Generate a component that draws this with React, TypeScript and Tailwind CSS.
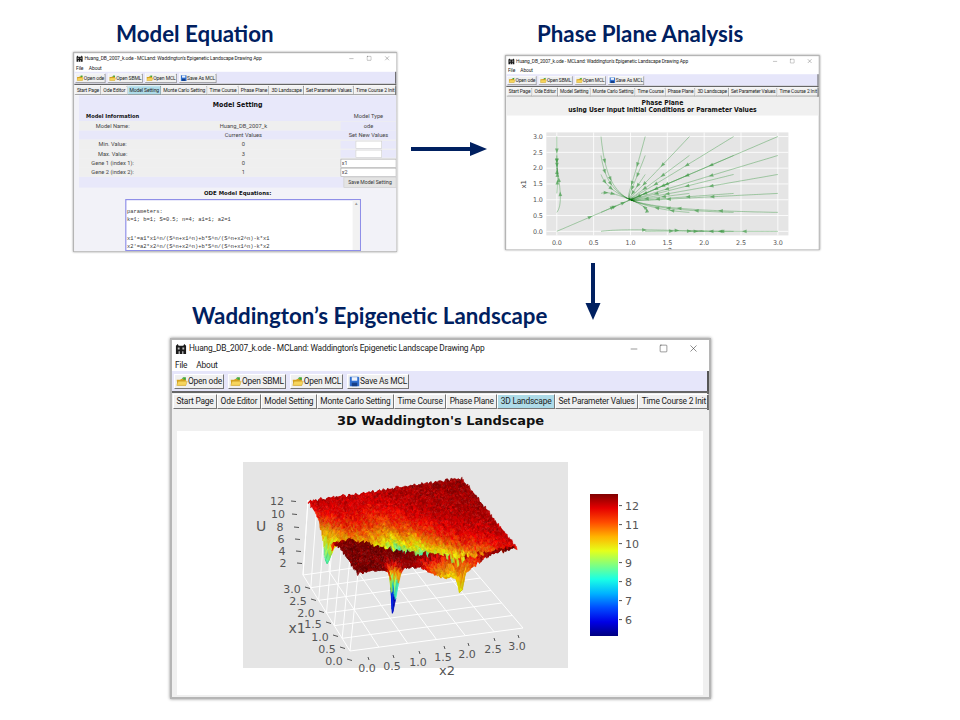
import type { ReactNode } from "react";
import { Minus, Square, X } from "lucide-react";

const TABS = [
  "Start Page",
  "Ode Editor",
  "Model Setting",
  "Monte Carlo Setting",
  "Time Course",
  "Phase Plane",
  "3D Landscape",
  "Set Parameter Values",
  "Time Course 2 Init",
];

function FolderIcon() {
  return (
    <svg width="12" height="11" viewBox="0 0 17 15" className="shrink-0">
      <path d="M1 5h5l1-1h7v9H2z" fill="#d9a520" />
      <path d="M1 13l2-6h13l-2 6z" fill="#f7d55c" stroke="#b8901c" strokeWidth="0.5" />
      <path d="M8 4c1-2 3-3 5-2l1-1v4h-4l1-1c-1-.5-2 0-3 0z" fill="#3fa535" />
    </svg>
  );
}

function SaveIcon() {
  return (
    <svg width="11" height="11" viewBox="0 0 14 14" className="shrink-0">
      <path d="M1 1h11l1 1v11H1z" fill="#2f6fd0" />
      <rect x="3.5" y="1.5" width="7" height="4.5" fill="#eef3fb" />
      <rect x="3.5" y="8.5" width="7" height="4.5" fill="#173f86" />
    </svg>
  );
}

function AppIcon() {
  return (
    <svg width="12" height="12" viewBox="0 0 13 13" className="shrink-0">
      <path d="M1 3l2-2 1 2h5l1-2 2 2v9h-3v-3H8v3H5V9H4v3H1z" fill="#1b1b1b" />
      <path d="M3 5h2v2H3zM8 5h2v2H8z" fill="#bdbdbd" />
    </svg>
  );
}

function ToolButton({ label, save }: { label: string; save?: boolean }) {
  return (
    <div className="flex h-[15px] items-center border border-b-[#777] border-l-white border-r-[#777] border-t-white bg-[#f0f0f0] px-px">
      {save ? <SaveIcon /> : <FolderIcon />}
      <span>{label}</span>
    </div>
  );
}

// full size is 541px wide, the two upper copies are scaled down from that
function AppWindow({ active, height, children }: { active?: string; height: string; children: ReactNode }) {
  return (
    <div
      className={`flex w-[541px] flex-col overflow-hidden border-2 border-[#b5b5b5] bg-white font-['Roboto',sans-serif] text-[8.4px] tracking-[-0.2px] text-[#222] ${height}`}
    >
      <div className="flex h-[17px] shrink-0 items-center gap-[2px] pl-[3px]">
        <AppIcon />
        <span>Huang_DB_2007_k.ode - MCLand: Waddington's Epigenetic Landscape Drawing App</span>
        <div className="ml-auto flex items-center gap-[20px] pr-[10px] text-[#333]">
          <Minus size={10} strokeWidth={1.2} />
          <Square size={9} strokeWidth={1.3} />
          <X size={11} strokeWidth={1.2} />
        </div>
      </div>
      <div className="flex h-[14px] shrink-0 items-center gap-[9px] pl-[3px] pt-[2px]">
        <span>File</span>
        <span>About</span>
      </div>
      <div className="flex h-[20px] shrink-0 items-center gap-[4px] border-r-2 border-[#555] bg-[#e6e6fa] pl-[2px] pt-px">
        <ToolButton label="Open ode" />
        <ToolButton label="Open SBML" />
        <ToolButton label="Open MCL" />
        <ToolButton label="Save As MCL" save />
      </div>
      <div className="flex h-[19px] shrink-0 items-center justify-between border-r-2 border-t-2 border-[#666] bg-[#f0f0f0] px-px">
        {TABS.map((tab) => (
          <div
            key={tab}
            className={`flex h-[15px] items-center whitespace-nowrap border border-b-[#777] border-l-white border-r-[#777] border-t-white px-[2.5px] ${
              tab === active ? "border-t-[#555] border-l-[#555] bg-[#aedbe8]" : ""
            }`}
          >
            {tab}
          </div>
        ))}
      </div>
      <div className="min-h-0 flex-1 overflow-hidden">{children}</div>
    </div>
  );
}

function Row({
  shade,
  first,
  second,
  third,
  input,
}: {
  shade?: boolean;
  first?: ReactNode;
  second?: ReactNode;
  third?: ReactNode;
  input?: string;
}) {
  return (
    <div className={`grid h-[17px] grid-cols-[112px_324px_1fr] items-center text-center text-[#444] ${shade ? "bg-[#efefef]" : "bg-[#e8e8fa]"}`}>
      <div>{first}</div>
      <div>{second}</div>
      {input !== undefined ? (
        <input
          readOnly
          defaultValue={input}
          className="h-[15px] w-full border border-[#999] bg-white pl-[1px] text-left text-[9px] outline-none"
        />
      ) : (
        <div className="bg-[#e8e8fa]">{third}</div>
      )}
    </div>
  );
}

function SmallBox() {
  return <div className="mx-auto h-[13px] w-[44px] border border-[#ccc] bg-white" />;
}

function ModelSetting() {
  return (
    <div className="flex h-full flex-col bg-[#f2f2f8] pl-[8px] font-['Roboto',sans-serif] text-[9.5px] tracking-normal">
      <div className="flex h-[30px] items-end justify-center bg-[#e8e8fa] pb-[4px] font-['DejaVu_Sans',sans-serif] text-[10.5px] font-bold text-[#111]">
        Model Setting
      </div>
      <Row first={<span className="font-['DejaVu_Sans',sans-serif] text-[8.5px] font-bold text-[#111]">Model Information</span>} third="Model Type" />
      <Row shade first="Model Name:" second="Huang_DB_2007_k" third="ode" />
      <Row second="Current Values" third="Set New Values" />
      <Row shade first="Min. Value:" second="0" third={<SmallBox />} />
      <Row shade first="Max. Value:" second="3" third={<SmallBox />} />
      <Row shade first="Gene 1 (index 1):" second="0" input="x1" />
      <Row shade first="Gene 2 (index 2):" second="1" input="x2" />
      <div className="flex h-[19px] justify-end bg-[#e8e8fa]">
        <div className="flex w-[88px] items-center justify-center border border-[#ccc] bg-[#e4e4e4] text-[8.5px] text-[#333]">Save Model Setting</div>
      </div>
      <div className="flex h-[21px] items-center justify-center font-['DejaVu_Sans',sans-serif] text-[9px] font-bold text-[#111]">ODE Model Equations:</div>
      <div className="ml-[77px] flex w-[393px] flex-1 border-2 border-[#8f8fe8] bg-white pl-[1px] font-['Liberation_Mono',monospace] text-[9px] leading-[11.5px] text-[#333]">
        <div className="flex-1 pt-[15px]">
          <div>parameters:</div>
          <div>k=1; b=1; S=0.5; n=4; a1=1; a2=1</div>
          <div className="mt-[22px]">x1'=a1*x1^n/(S^n+x1^n)+b*S^n/(S^n+x2^n)-k*x1</div>
          <div>x2'=a2*x2^n/(S^n+x2^n)+b*S^n/(S^n+x1^n)-k*x2</div>
        </div>
        <div className="w-[12px] shrink-0 bg-[#f2f2f2] text-center text-[7px] leading-[12px] text-[#999]">▲</div>
      </div>
    </div>
  );
}

// x1, x2 phase flow from the equations shown in the model window
function flow(x1: number, x2: number): [number, number] {
  const s = 0.0625;
  const h = (v: number) => (v * v * v * v) / (s + v * v * v * v);
  const r = (v: number) => s / (s + v * v * v * v);
  return [h(x1) + r(x2) - x1, h(x2) + r(x1) - x2];
}

const GRID_STARTS = [0, 0.6, 1.2, 1.8, 2.4, 3];

function trajectories() {
  const out: { d: string; marks: { x: number; y: number; a: number }[] }[] = [];
  const px = (x2: number) => 87 + 126.6 * x2;
  const py = (x1: number) => 199 - 54.3 * x1;
  for (const a of GRID_STARTS) {
    for (const b of GRID_STARTS) {
      let x1 = a;
      let x2 = b;
      let d = `M${px(x2).toFixed(1)} ${py(x1).toFixed(1)}`;
      const marks: { x: number; y: number; a: number }[] = [];
      for (let i = 1; i < 400; i++) {
        const [d1, d2] = flow(x1, x2);
        x1 += d1 * 0.02;
        x2 += d2 * 0.02;
        d += `L${px(x2).toFixed(1)} ${py(x1).toFixed(1)}`;
        if ((i === 30 || i === 70) && Math.hypot(d1, d2) > 0.1) {
          const ang = (Math.atan2(-d1 * 54.3, d2 * 126.6) * 180) / Math.PI;
          marks.push({ x: px(x2), y: py(x1), a: ang });
        }
      }
      out.push({ d, marks });
    }
  }
  return out;
}

function PhasePlane() {
  const ticks = [0, 0.5, 1, 1.5, 2, 2.5, 3];
  return (
    <div className="flex h-full flex-col">
      <div className="flex h-[32px] shrink-0 flex-col items-center bg-[#f0f0f0] font-['DejaVu_Sans',sans-serif] text-[10.4px] font-bold leading-[12px] tracking-normal text-[#111]">
        <span className="pt-[4px]">Phase Plane</span>
        <span>using User input Initial Conditions or Parameter Values</span>
      </div>
      <svg viewBox="0 0 537 236" className="block h-[236px] w-[537px] shrink-0 font-['DejaVu_Sans',sans-serif]">
        <rect x="69" y="29" width="416" height="177" fill="#e5e5e5" />
        {ticks.map((t) => (
          <g key={t}>
            <line x1={87 + 126.6 * t} x2={87 + 126.6 * t} y1="29" y2="206" stroke="#fff" strokeWidth="1.4" />
            <line x1="69" x2="485" y1={199 - 54.3 * t} y2={199 - 54.3 * t} stroke="#fff" strokeWidth="1.4" />
            <text x={87 + 126.6 * t} y="222" fontSize="11" fill="#555" textAnchor="middle">
              {t.toFixed(1)}
            </text>
            <text x="63" y={203 - 54.3 * t} fontSize="11" fill="#555" textAnchor="end">
              {t.toFixed(1)}
            </text>
          </g>
        ))}
        {trajectories().map((tr, i) => (
          <g key={i}>
            <path d={tr.d} fill="none" stroke="#3f9a45" strokeOpacity="0.5" strokeWidth="1.5" />
            {tr.marks.map((m, j) => (
              <path
                key={j}
                d="M4 0L-4 -3.2L-4 3.2Z"
                fill="#3f9a45"
                fillOpacity="0.65"
                transform={`translate(${m.x.toFixed(1)} ${m.y.toFixed(1)}) rotate(${m.a.toFixed(0)})`}
              />
            ))}
          </g>
        ))}
        <text x="30" y="122" fontSize="12" fill="#444" textAnchor="middle" transform="rotate(-90 30 118)">
          x1
        </text>
        <text x="278" y="236" fontSize="12" fill="#444" textAnchor="middle">
          x2
        </text>
      </svg>
    </div>
  );
}

function jet(t: number, shade = 1) {
  const c = (v: number) => Math.round(Math.max(0, Math.min(1, v)) * 255 * shade);
  const r = Math.min(4 * t - 1.5, -4 * t + 4.5);
  const g = Math.min(4 * t - 0.5, -4 * t + 3.5);
  const b = Math.min(4 * t + 0.5, -4 * t + 2.5);
  return `rgb(${c(r)},${c(g)},${c(b)})`;
}

const rnd = (a: number, b: number) => {
  const s = Math.sin(a * 127.1 + b * 311.7) * 43758.5453;
  return s - Math.floor(s);
};

// corners measured off the picture: back-left, back-right, front-right, front-left
function project(u: number, v: number, z: number): [number, number] {
  const mix = (a: number, b: number, t: number) => a + (b - a) * t;
  const topX = mix(mix(358, 517, u), mix(308, 462, u), v);
  const topY = mix(mix(573, 547, u), mix(500, 478, u), v);
  const floorX = mix(mix(350, 523, u), mix(303, 459, u), v);
  const floorY = mix(mix(651, 628, u), mix(575, 553, u), v);
  const t = z / 12.5;
  return [mix(floorX, topX, t), mix(floorY, topY, t)];
}

const WELLS = [
  { u: 0.24, v: 0.01, su: 0.016, sv: 0.05, drop: 5, tint: 4.8 },
  { u: 0.24, v: 0.02, su: 0.04, sv: 0.07, drop: 2.2, tint: 2.6 },
  { u: 0.65, v: 0.02, su: 0.018, sv: 0.05, drop: 3, tint: 0.5 },
  { u: 0.6, v: 0.02, su: 0.17, sv: 0.09, drop: 3.2, tint: 2.3 },
  { u: 0.01, v: 0.6, su: 0.02, sv: 0.05, drop: 3.2, tint: 1 },
  { u: 0.01, v: 0.62, su: 0.06, sv: 0.14, drop: 2.4, tint: 1.7 },
];

function lerpTable(table: [number, number][], x: number) {
  for (let i = 1; i < table.length; i++) {
    if (x <= table[i][0]) {
      const [x0, y0] = table[i - 1];
      const [x1, y1] = table[i];
      return y0 + ((y1 - y0) * (x - x0)) / (x1 - x0);
    }
  }
  return table[table.length - 1][1];
}

// the near plateau hides the steep side of the basin, so only its far slope shows
const RIDGE: [number, number][] = [
  [0, 0.55],
  [0.35, 0.17],
  [0.55, 0.12],
  [1, 0],
];
const BASIN: [number, number][] = [
  [0, 1.6],
  [0.2, 2.4],
  [0.35, 4.4],
  [0.5, 3],
  [0.7, 1.5],
  [1, 0.6],
];

function height(u: number, v: number) {
  const col = Math.round(u * 84);
  const ridge = lerpTable(RIDGE, u) + (rnd(col, 5) - 0.5) * 0.05;
  const streak = 0.85 + rnd(col, 9) * 0.3;
  const basin = v > ridge ? lerpTable(BASIN, u) * streak * Math.exp(-(v - ridge) / 0.34) : 0;
  let drop = basin * 0.22;
  let tint = basin;
  for (const w of WELLS) {
    const e = Math.exp(-(((u - w.u) / w.su) ** 2) - ((v - w.v) / w.sv) ** 2);
    drop += w.drop * e;
    tint += w.tint * e;
  }
  const noise = (rnd(u * 91, v * 91) - 0.5) * 0.7;
  return { z: 12.4 - drop + noise, level: 12.35 - tint + noise * 0.8, front: v <= ridge };
}

function Surface() {
  const N = 84;
  const cells = [];
  for (let j = N - 1; j >= 0; j--) {
    for (let i = 0; i < N; i++) {
      const corners = [
        [i, j],
        [i + 1, j],
        [i + 1, j + 1],
        [i, j + 1],
      ];
      const pts = corners
        .map(([a, b]) => {
          const h = height(a / N, b / N);
          return project(a / N, b / N, h.z).map((n) => n.toFixed(1)).join(",");
        })
        .join(" ");
      const mid = height((i + 0.5) / N, (j + 0.5) / N);
      const t = (mid.level - 5.15) / 7.45;
      const r = rnd(i + 3, j + 7);
      const shade = mid.front && mid.level > 11.6 ? 0.62 + r * 0.25 : 0.8 + r * 0.2;
      const fill = jet(t, shade);
      cells.push(<polygon key={`${i}-${j}`} points={pts} fill={fill} stroke={fill} strokeWidth="0.4" />);
    }
  }
  return <g>{cells}</g>;
}

const Z_TICKS: [string, number, number][] = [
  ["12", 277, 505],
  ["10", 278, 518],
  ["8", 280, 531],
  ["6", 281, 543],
  ["4", 282, 555],
  ["2", 283, 567],
];
const X1_TICKS: [string, number, number][] = [
  ["3.0", 292, 593],
  ["2.5", 298, 605],
  ["2.0", 306, 617],
  ["1.5", 313, 628],
  ["1.0", 320, 641],
  ["0.5", 327, 653],
  ["0.0", 334, 665],
];
const X2_TICKS: [string, number, number][] = [
  ["0.0", 367, 672],
  ["0.5", 392, 670],
  ["1.0", 418, 666],
  ["1.5", 443, 661],
  ["2.0", 467, 658],
  ["2.5", 493, 653],
  ["3.0", 517, 650],
];

function PaneGrid() {
  const lines = [];
  for (let k = 0; k <= 6; k++) {
    const t = k / 6;
    const a = project(t, 0, 0);
    const b = project(t, 1, 0);
    const c = project(0, t, 0);
    const d = project(1, t, 0);
    const e = project(0, t, 12.5);
    const f = project(t, 1, 12.5);
    lines.push(
      <g key={k} stroke="#fff" strokeWidth="1">
        <line x1={a[0]} y1={a[1]} x2={b[0]} y2={b[1]} />
        <line x1={c[0]} y1={c[1]} x2={d[0]} y2={d[1]} />
        <line x1={c[0]} y1={c[1]} x2={e[0]} y2={e[1]} />
        <line x1={b[0]} y1={b[1]} x2={f[0]} y2={f[1]} />
      </g>,
    );
  }
  return <g>{lines}</g>;
}

function Landscape() {
  const barTicks = [12, 11, 10, 9, 8, 7, 6];
  return (
    <div className="flex h-full flex-col bg-[#f0f0f0] px-[5px]">
      <div className="flex h-[21px] shrink-0 items-center justify-center font-['DejaVu_Sans',sans-serif] text-[13px] font-bold tracking-normal text-[#111]">
        3D Waddington's Landscape
      </div>
      <svg viewBox="177 431 526 264" className="block h-[264px] w-[526px] shrink-0 bg-white font-['DejaVu_Sans',sans-serif] tracking-normal">
        <defs>
          <linearGradient id="jetBar" x1="0" y1="1" x2="0" y2="0">
            {[0, 0.1, 0.2, 0.3, 0.4, 0.5, 0.6, 0.7, 0.8, 0.9, 1].map((t) => (
              <stop key={t} offset={t} stopColor={jet(t)} />
            ))}
          </linearGradient>
        </defs>
        <rect x="243" y="462" width="325" height="206" fill="#e5e5e5" />
        <PaneGrid />
        <Surface />
        {Z_TICKS.map(([label, x, y]) => (
          <g key={label}>
            <text x={x} y={y} fontSize="11" fill="#555" textAnchor="middle">
              {label}
            </text>
            <line x1={x + 14} x2={x + 19} y1={y - 4} y2={y - 3.5} stroke="#555" />
          </g>
        ))}
        {X1_TICKS.map(([label, x, y]) => (
          <g key={label}>
            <text x={x} y={y} fontSize="11" fill="#555" textAnchor="middle">
              {label}
            </text>
            <line x1={x + 13} x2={x + 18} y1={y - 6} y2={y - 4.5} stroke="#555" />
          </g>
        ))}
        {X2_TICKS.map(([label, x, y]) => (
          <g key={label}>
            <text x={x} y={y} fontSize="11" fill="#555" textAnchor="middle">
              {label}
            </text>
            <line x1={x + 1} x2={x + 2} y1={y - 15} y2={y - 12} stroke="#555" />
          </g>
        ))}
        <text x="261" y="531" fontSize="14" fill="#555" textAnchor="middle">
          U
        </text>
        <text x="297" y="633" fontSize="14" fill="#555" textAnchor="middle">
          x1
        </text>
        <text x="447" y="675" fontSize="13" fill="#555" textAnchor="middle">
          x2
        </text>
        <rect x="590" y="494" width="28" height="142" fill="url(#jetBar)" />
        {barTicks.map((t) => {
          const y = 505.6 + (12 - t) * 19;
          return (
            <g key={t}>
              <line x1="619" x2="622" y1={y} y2={y} stroke="#555" />
              <text x="625" y={y + 4} fontSize="11" fill="#555">
                {t}
              </text>
            </g>
          );
        })}
      </svg>
    </div>
  );
}

function Heading({ children, className }: { children: ReactNode; className: string }) {
  return <h2 className={`font-['Lato',sans-serif] text-[22.3px] font-bold leading-[26px] text-[#002060] ${className}`}>{children}</h2>;
}

export default function App() {
  return (
    <div className="flex h-[720px] w-[960px] flex-col overflow-hidden bg-white">
      <div className="flex h-[263px] shrink-0 pl-[73px]">
        <div className="w-[324px] pt-[21px]">
          <Heading className="ml-[43px] h-[31px]">Model Equation</Heading>
          <div className="h-[200px] w-[324px] overflow-hidden shadow-[0_0_2px_#999]">
            <div className="origin-top-left scale-[0.6]">
              <AppWindow active="Model Setting" height="h-[334px]">
                <ModelSetting />
              </AppWindow>
            </div>
          </div>
        </div>
        <svg width="108" height="20" viewBox="0 0 108 20" className="mt-[139px] shrink-0">
          <path d="M14 10H74" stroke="#002060" strokeWidth="4" />
          <path d="M73 3L90 10L73 17Z" fill="#002060" />
        </svg>
        <div className="w-[315px] pt-[21px]">
          <Heading className="ml-[32px] h-[34px]">Phase Plane Analysis</Heading>
          <div className="h-[195px] w-[315px] overflow-hidden shadow-[0_0_2px_#999]">
            <div className="origin-top-left scale-[0.582]">
              <AppWindow height="h-[336px]">
                <PhasePlane />
              </AppWindow>
            </div>
          </div>
        </div>
      </div>
      <div className="flex h-[75px] shrink-0">
        <Heading className="ml-[192px] mt-[40px] w-[393px] whitespace-nowrap">Waddington’s Epigenetic Landscape</Heading>
        <svg width="16" height="58" viewBox="0 0 16 58" className="shrink-0">
          <path d="M8 0V42" stroke="#002060" strokeWidth="4" />
          <path d="M0.5 40L8 57L15.5 40Z" fill="#002060" />
        </svg>
      </div>
      <div className="ml-[170px] w-[541px] shadow-[0_0_3px_#888]">
        <AppWindow active="3D Landscape" height="h-[361px]">
          <Landscape />
        </AppWindow>
      </div>
    </div>
  );
}
